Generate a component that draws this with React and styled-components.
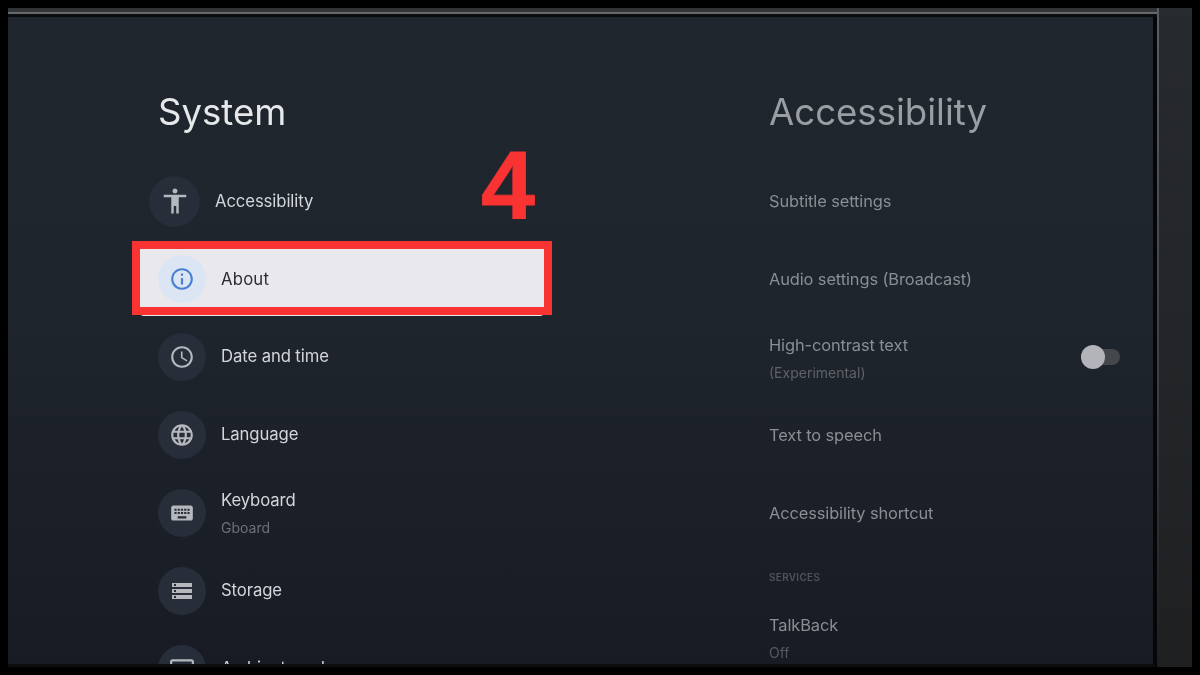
import React from "react";
import styled, { createGlobalStyle } from "styled-components";
import {
  MdAccessibility,
  MdInfoOutline,
  MdAccessTime,
  MdLanguage,
  MdKeyboard,
  MdStorage,
  MdOutlinePhotoSizeSelectActual,
} from "react-icons/md";

const menu = [
  { label: "Accessibility", icon: MdAccessibility, focus: true },
  { label: "About", icon: MdInfoOutline, active: true },
  { label: "Date and time", icon: MdAccessTime },
  { label: "Language", icon: MdLanguage },
  { label: "Keyboard", sub: "Gboard", icon: MdKeyboard },
  { label: "Storage", icon: MdStorage, small: true },
  { label: "Ambient mode", icon: MdOutlinePhotoSizeSelectActual },
];

const options = [
  { label: "Subtitle settings" },
  { label: "Audio settings (Broadcast)" },
  { label: "High-contrast text", sub: "(Experimental)", toggle: true },
  { label: "Text to speech" },
  { label: "Accessibility shortcut" },
];

export default function App() {
  return (
    <Page>
      <GlobalStyle />
      <Screen>
        <Tv>
          <TopBezel />
          <Panel>
            <MenuColumn>
              <Title>System</Title>
              {menu.map((item) => (
                <MenuRow key={item.label} $active={item.active} $focus={item.focus}>
                  <IconCircle $active={item.active} $focus={item.focus}>
                    <item.icon size={item.focus ? 30 : item.small ? 24 : 26} />
                  </IconCircle>
                  <div>
                    <MenuLabel $active={item.active} $focus={item.focus}>
                      {item.label}
                    </MenuLabel>
                    {item.sub && <MenuSub>{item.sub}</MenuSub>}
                  </div>
                  {item.active && (
                    <>
                      <RedFrame />
                      <StepNumber>4</StepNumber>
                    </>
                  )}
                </MenuRow>
              ))}
            </MenuColumn>
            <OptionColumn>
              <Title $dim>Accessibility</Title>
              {options.map((item) => (
                <OptionRow key={item.label}>
                  <div>
                    <OptionLabel>{item.label}</OptionLabel>
                    {item.sub && <OptionSub>{item.sub}</OptionSub>}
                  </div>
                  {item.toggle && (
                    <Toggle>
                      <Thumb />
                    </Toggle>
                  )}
                </OptionRow>
              ))}
              <SectionLabel>SERVICES</SectionLabel>
              <OptionLabel>TalkBack</OptionLabel>
              <OptionSub $faint>Off</OptionSub>
            </OptionColumn>
          </Panel>
        </Tv>
        <SideStrip />
      </Screen>
    </Page>
  );
}

const GlobalStyle = createGlobalStyle`
  html, body {
    margin: 0;
    padding: 0;
    background: #000;
  }
`;

const Page = styled.div`
  box-sizing: border-box;
  width: 1200px;
  height: 675px;
  padding: 8px;
  background: #000;
  overflow: hidden;
  font-family: Inter, "Noto Sans", sans-serif;
`;

const Screen = styled.div`
  display: flex;
  height: 659px;
`;

const Tv = styled.div`
  display: flex;
  flex-direction: column;
  width: 1149px;
  border-right: 2px solid;
  border-image: linear-gradient(#5a5e62, #3a3d40 60%, #1c1e20) 1;
`;

const TopBezel = styled.div`
  height: 9px;
  flex-shrink: 0;
  box-sizing: border-box;
  background: linear-gradient(
    #2e3235 0,
    #33373a 4px,
    #686c6f 4px,
    #62666a 6px,
    #0a0c0e 6px
  );
`;

const Panel = styled.div`
  flex: 1;
  min-height: 0;
  display: flex;
  padding-left: 150px;
  border-right: 4px solid #050607;
  border-bottom: 3px solid #0c0d0f;
  background: linear-gradient(#1f262e, #1f252d 45%, #181b23);
  overflow: hidden;
`;

const MenuColumn = styled.div`
  width: 611px;
  flex-shrink: 0;
  filter: blur(0.35px);
`;

const OptionColumn = styled.div`
  width: 351px;
  flex-shrink: 0;
  filter: blur(0.35px);
`;

const Title = styled.h1`
  margin: 0;
  padding: 72px 0 27px;
  height: 46px;
  line-height: 46px;
  font-size: 36.6px;
  font-weight: 400;
  color: ${(p) => (p.$dim ? "#9a9da1" : "#e6e8ea")};
`;

const MenuRow = styled.div`
  position: relative;
  display: flex;
  align-items: center;
  gap: 15px;
  box-sizing: border-box;
  height: 78px;
  ${(p) => p.$focus && "margin-left: -9px;"}
  ${(p) =>
    p.$active &&
    `
    height: 68px;
    margin: 8px 0 2px -18px;
    padding: 0 0 6px 18px;
    width: 404px;
    background: #e9e9ed;
    border-radius: 0 0 4px 4px;
  `}
`;

const IconCircle = styled.div`
  display: flex;
  align-items: center;
  justify-content: center;
  flex-shrink: 0;
  width: ${(p) => (p.$focus ? 51 : 48)}px;
  height: ${(p) => (p.$focus ? 51 : 48)}px;
  border-radius: 50%;
  background: ${(p) => (p.$active ? "#dbe5f3" : "#272d39")};
  color: ${(p) => (p.$active ? "#4a80d0" : "#b5b8bd")};
`;

const MenuLabel = styled.div`
  margin-top: ${(p) => (p.$active || p.$focus ? 0 : -2)}px;
  font-size: 16.7px;
  line-height: 24px;
  letter-spacing: ${(p) => (p.$active ? 0.2 : -0.1)}px;
  color: ${(p) => (p.$active ? "#2a2c30" : "#d3d6da")};
`;

const MenuSub = styled.div`
  margin: 6px 0 -2px;
  font-size: 14px;
  line-height: 20px;
  color: #6d7076;
`;

const OptionRow = styled.div`
  display: flex;
  align-items: center;
  justify-content: space-between;
  height: 78px;
`;

const OptionLabel = styled.div`
  font-size: 16.4px;
  line-height: 26px;
  letter-spacing: -0.1px;
  color: #8b8e93;
`;

const OptionSub = styled.div`
  margin-top: 5px;
  font-size: 14px;
  line-height: 20px;
  color: ${(p) => (p.$faint ? "#55585d" : "#5f6267")};
`;

const SectionLabel = styled.div`
  margin: 18px 0 28px;
  font-size: 10px;
  line-height: 14px;
  font-weight: 600;
  letter-spacing: 0.3px;
  color: #50535a;
`;

const Toggle = styled.div`
  position: relative;
  width: 39px;
  height: 16px;
  border-radius: 8px;
  background: #44474c;
`;

const Thumb = styled.div`
  position: absolute;
  left: 0;
  top: -4px;
  width: 24px;
  height: 24px;
  border-radius: 50%;
  background: #b2b4ba;
`;

const RedFrame = styled.div`
  position: absolute;
  left: -8px;
  top: -7px;
  width: 420px;
  height: 74px;
  box-sizing: border-box;
  border: 8px solid #f93232;
`;

const StepNumber = styled.div`
  position: absolute;
  left: 341px;
  top: -111px;
  font-family: "Liberation Sans", Arial, sans-serif;
  font-size: 97px;
  line-height: 97px;
  font-weight: 700;
  -webkit-text-stroke: 0.8px #f93232;
  color: #f93232;
`;

const SideStrip = styled.div`
  flex: 1;
  background: linear-gradient(#282b2e, #1e2022);
`;
